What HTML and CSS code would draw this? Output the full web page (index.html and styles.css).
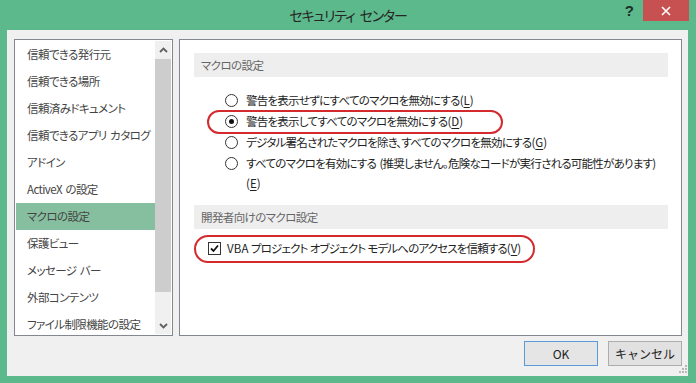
FILE: index.html
```html
<!DOCTYPE html>
<html lang="ja">
<head>
  <meta charset="UTF-8">
  <title>セキュリティ センター</title>
  <link rel="stylesheet" href="styles.css">
</head>
<body>
  <div class="window">
    <div class="titlebar">
      <span></span>
      <span class="title">セキュリティ センター</span>
      <div class="controls">
        <span class="help">?</span>
        <span class="close">
          <svg width="10" height="10" viewBox="0 0 10 10"><path d="M1 1L9 9M9 1L1 9" stroke="#fff" stroke-width="1.6" fill="none"/></svg>
        </span>
      </div>
    </div>

    <div class="dialog">
      <div class="content">
        <div class="nav">
          <ul class="nav-items">
            <li>信頼できる発行元</li>
            <li>信頼できる場所</li>
            <li>信頼済みドキュメント</li>
            <li>信頼できるアプリ カタログ</li>
            <li>アドイン</li>
            <li>ActiveX の設定</li>
            <li class="active">マクロの設定</li>
            <li>保護ビュー</li>
            <li>メッセージ バー</li>
            <li>外部コンテンツ</li>
            <li>ファイル制限機能の設定</li>
          </ul>
          <div class="scrollbar">
            <div class="arrow">
              <svg width="9" height="6" viewBox="0 0 9 6"><path d="M1 5L4.5 1.5L8 5" stroke="#606060" stroke-width="1.8" fill="none"/></svg>
            </div>
            <div class="track"><div class="thumb"></div></div>
            <div class="arrow">
              <svg width="9" height="6" viewBox="0 0 9 6"><path d="M1 1L4.5 4.5L8 1" stroke="#606060" stroke-width="1.8" fill="none"/></svg>
            </div>
          </div>
        </div>

        <div class="panel">
          <div class="section-title">マクロの設定</div>
          <div class="options">
            <div class="option"><span class="radio"></span><span>警告を表示せずにすべてのマクロを無効にする<span class="key">(<u>L</u>)</span></span></div>
            <div class="option"><span class="radio checked"></span><span>警告を表示してすべてのマクロを無効にする<span class="key">(<u>D</u>)</span></span><span class="mark mark-radio"></span></div>
            <div class="option"><span class="radio"></span><span>デジタル署名されたマクロを除き、すべてのマクロを無効にする<span class="key">(<u>G</u>)</span></span></div>
            <div class="option"><span class="radio"></span><span>すべてのマクロを有効にする (推奨しません。危険なコードが実行される可能性があります)<br><span class="key">(<u>E</u>)</span></span></div>
          </div>

          <div class="section-title second">開発者向けのマクロ設定</div>
          <div class="check-row">
            <span class="checkbox">
              <svg width="11" height="11" viewBox="0 0 11 11"><path d="M2 5.5L4.5 8L9 2.5" stroke="#111" stroke-width="1.8" fill="none"/></svg>
            </span>
            <span><span class="latin">VBA</span> プロジェクト オブジェクト モデルへのアクセスを信頼する<span class="key">(<u>V</u>)</span></span>
            <span class="mark mark-check"></span>
          </div>
        </div>
      </div>

      <div class="footer">
        <button class="btn default" type="button">OK</button>
        <button class="btn" type="button">キャンセル</button>
      </div>

      <svg class="grip" width="9" height="9" viewBox="0 0 9 9" fill="#b8b8b8">
        <rect x="6" y="0" width="2" height="2"/>
        <rect x="3" y="3" width="2" height="2"/><rect x="6" y="3" width="2" height="2"/>
        <rect x="0" y="6" width="2" height="2"/><rect x="3" y="6" width="2" height="2"/><rect x="6" y="6" width="2" height="2"/>
      </svg>
    </div>
  </div>
</body>
</html>
```

FILE: styles.css
```css
/* general */
* {
  box-sizing: border-box;
}

body {
  margin: 0;
  font-family: "Noto Sans CJK JP", "Noto Sans", sans-serif;
  font-feature-settings: "palt";
  font-size: 11.5px;
  letter-spacing: -0.75px;
  word-spacing: 1.5px;
  color: #222;
}

.window {
  width: 696px;
  height: 383px;
  background-color: #5cb98c;
  display: flex;
  flex-direction: column;
}

/* title bar */
.titlebar {
  height: 30px;
  flex: none;
  display: grid;
  grid-template-columns: 1fr auto 1fr;
}

.title {
  font-size: 14px;
  letter-spacing: -1.2px;
  word-spacing: 3px;
  line-height: 30px;
  color: #262626;
}

.controls {
  justify-self: end;
  display: flex;
  align-items: flex-start;
  padding-right: 7px;
}

.help {
  font-family: "Liberation Sans", sans-serif;
  font-weight: bold;
  font-size: 15px;
  letter-spacing: 0;
  line-height: 22px;
  color: #1e2e26;
  margin-right: 9px;
}

.close {
  width: 46px;
  height: 21px;
  background-color: #c75050;
  display: flex;
  align-items: center;
  justify-content: center;
}

/* dialog body */
.dialog {
  flex: 1;
  margin: 0 8px 7px 7px;
  padding: 9px 6px 0 7px;
  background-color: #f0f0f0;
  position: relative;
}

.content {
  display: flex;
  gap: 6px;
  height: 297px;
}

/* left list */
.nav {
  width: 159px;
  flex: none;
  display: flex;
  padding: 1px;
  border: 1px solid #828790;
  background-color: #fff;
  overflow: hidden;
}

.nav-items {
  width: 139px;
  margin: 0;
  padding: 0;
  list-style: none;
}

.nav-items li {
  height: 27px;
  line-height: 27px;
  padding-left: 11px;
  color: #444;
  letter-spacing: -0.6px;
  white-space: nowrap;
  overflow: hidden;
}

.nav-items li.active {
  background-color: #86bf9f;
}

.scrollbar {
  width: 16px;
  display: flex;
  flex-direction: column;
  background-color: #f0f0f0;
}

.scrollbar .arrow {
  height: 17px;
  display: flex;
  align-items: center;
  justify-content: center;
}

.scrollbar .track {
  flex: 1;
  padding: 1px 0 25px;
}

.scrollbar .thumb {
  height: 100%;
  background-color: #cdcdcd;
}

/* right panel */
.panel {
  width: 503px;
  flex: none;
  padding: 13px 13px 0 14px;
  border: 1px solid #828790;
  background-color: #fff;
}

.section-title {
  height: 24px;
  line-height: 24px;
  padding-left: 7px;
  background-color: #eee;
  color: #666;
  letter-spacing: -0.6px;
}

.section-title.second {
  margin-top: 12px;
}

.options {
  padding: 13px 0 0 31px;
}

.option {
  width: fit-content;
  display: flex;
  align-items: flex-start;
  gap: 8px;
  line-height: 21px;
  white-space: nowrap;
  position: relative;
}

.option:last-child {
  line-height: 20px;
}

.key {
  letter-spacing: 0;
}

.latin {
  letter-spacing: 0.2px;
}

.key u {
  text-underline-offset: 2px;
}

.radio {
  width: 13px;
  height: 13px;
  flex: none;
  margin-top: 4px;
  border: 1px solid #333;
  border-radius: 50%;
  background-color: #fff;
  display: flex;
  align-items: center;
  justify-content: center;
}

.radio.checked::after {
  content: "";
  width: 5px;
  height: 5px;
  border-radius: 50%;
  background-color: #111;
}

.check-row {
  width: fit-content;
  display: flex;
  align-items: flex-start;
  gap: 6px;
  margin: 9px 0 0 14px;
  line-height: 21px;
  letter-spacing: -0.85px;
  word-spacing: 0.5px;
  white-space: nowrap;
  position: relative;
}

.checkbox {
  width: 13px;
  height: 13px;
  flex: none;
  margin-top: 4px;
  border: 1px solid #333;
  background-color: #fff;
  display: flex;
  align-items: center;
  justify-content: center;
}

/* red highlight marks */
.mark {
  position: absolute;
  border: 2px solid #d42a2e;
  border-radius: 12px;
  pointer-events: none;
}

.mark-radio {
  left: -18px;
  right: -40px;
  top: -1px;
  height: 24px;
}

.mark-check {
  left: -14px;
  right: -14px;
  top: -3px;
  height: 28px;
  border-radius: 14px;
}

/* footer */
.footer {
  display: flex;
  justify-content: flex-end;
  gap: 10px;
  padding-top: 5px;
}

.btn {
  width: 74px;
  height: 25px;
  padding: 0;
  border: 1px solid #adadad;
  background-color: #e1e1e1;
  font-family: inherit;
  font-size: 12px;
  letter-spacing: 0;
  word-spacing: 0;
  color: #222;
}

.btn.default {
  border-color: #5a9ad6;
  background-color: #e5e5e5;
}

.grip {
  position: absolute;
  right: 0;
  bottom: 2px;
}
```
